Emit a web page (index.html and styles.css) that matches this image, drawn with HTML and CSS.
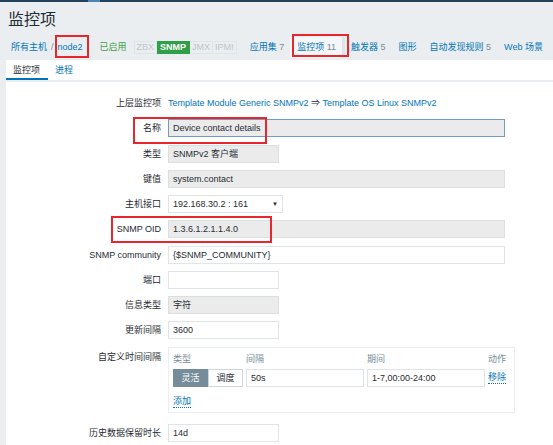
FILE: index.html
```html
<!DOCTYPE html>
<html lang="zh-CN">
<head>
<meta charset="utf-8">
<title>监控项</title>
<link rel="stylesheet" href="styles.css">
</head>
<body>
<div class="topbar"></div>
<header class="page-head">
  <h1 class="title">监控项</h1>
  <nav class="crumbs">
    <a class="link">所有主机</a><span class="sep">/</span><a class="link">node2</a>
    <span class="enabled">已启用</span>
    <span class="status"><span class="st">ZBX</span><span class="st on">SNMP</span><span class="st">JMX</span><span class="st">IPMI</span></span>
    <a class="menu first">应用集 <span class="cnt">7</span></a>
    <a class="menu selected">监控项 <span class="cnt">11</span></a>
    <a class="menu after-sel">触发器 <span class="cnt">5</span></a>
    <a class="menu">图形</a>
    <a class="menu">自动发现规则 <span class="cnt">5</span></a>
    <a class="menu">Web 场景</a>
  </nav>
</header>
<main class="panel">
  <div class="tabs">
    <span class="tab active">监控项</span>
    <span class="tab">进程</span>
  </div>
  <form class="form">
    <label class="lbl">上层监控项</label>
    <div class="val"><a class="link">Template Module Generic SNMPv2</a> ⇒ <a class="link">Template OS Linux SNMPv2</a></div>

    <label class="lbl">名称</label>
    <div class="field wide ro focus">Device contact details</div>

    <label class="lbl">类型</label>
    <div class="field short ro">SNMPv2 客户端</div>

    <label class="lbl">键值</label>
    <div class="field wide ro">system.contact</div>

    <label class="lbl">主机接口</label>
    <div class="field select">192.168.30.2 : 161<span class="arrow">▼</span></div>

    <label class="lbl">SNMP OID</label>
    <div class="field wide ro">1.3.6.1.2.1.1.4.0</div>

    <label class="lbl">SNMP community</label>
    <div class="field wide">{$SNMP_COMMUNITY}</div>

    <label class="lbl">端口</label>
    <div class="field short"></div>

    <label class="lbl">信息类型</label>
    <div class="field short ro">字符</div>

    <label class="lbl">更新间隔</label>
    <div class="field short">3600</div>

    <label class="lbl top">自定义时间间隔</label>
    <div class="intervals">
      <div class="int-grid">
        <span class="th">类型</span>
        <span class="th">间隔</span>
        <span class="th">期间</span>
        <span class="th">动作</span>
        <span class="seg"><span class="btn on">灵活</span><span class="btn">调度</span></span>
        <span class="field">50s</span>
        <span class="field">1-7,00:00-24:00</span>
        <a class="link dotted act">移除</a>
      </div>
      <a class="link dotted add">添加</a>
    </div>

    <label class="lbl">历史数据保留时长</label>
    <div class="field short">14d</div>
  </form>
</main>
<div class="mark mark-node"></div>
<div class="mark mark-items"></div>
<div class="mark mark-name"></div>
<div class="mark mark-oid"></div>
</body>
</html>
```

FILE: styles.css
```css
html, body {
  margin: 0;
  padding: 0;
}
body {
  background: #ebeef0;
  color: #1f2c33;
  font-family: "Liberation Sans", "Noto Sans CJK SC", sans-serif;
  font-size: 9px;
  line-height: 12px;
  overflow: hidden;
  height: 445px;
}
.topbar {
  height: 2px;
  background: linear-gradient(to right, #23415b 0, #23415b 88px, #4a86b5 88px, #4a86b5 100px, #23415b 100px);
}
.page-head {
  padding-left: 8px;
}
.title {
  margin: 0;
  padding-top: 8px;
  font-size: 16px;
  line-height: 20px;
  font-weight: normal;
  color: #1f2c33;
}
.crumbs {
  display: flex;
  align-items: center;
  height: 22px;
  margin-top: 6px;
  padding-left: 3px;
  white-space: nowrap;
}
.link {
  color: #0275b8;
  text-decoration: none;
}
.sep {
  margin: 0 4px;
  color: #768d99;
}
.enabled {
  margin-left: 17px;
  color: #429e47;
}
.status {
  display: flex;
  margin-left: 7px;
  height: 13px;
}
.st {
  display: inline-block;
  height: 13px;
  line-height: 11px;
  box-sizing: border-box;
  padding: 0 2px;
  border: 1px solid #dfe4e7;
  color: #bcc5ca;
}
.st + .st {
  border-left: none;
}
.st.on {
  background: #2f9f48;
  border-color: #2f9f48;
  color: #fff;
  font-weight: bold;
  padding: 0 3px;
}
.menu {
  color: #0275b8;
  margin-left: 13px;
}
.menu.first {
  margin-left: 13px;
}
.menu.selected {
  margin-left: 6px;
  padding: 0 6px 0 7px;
  line-height: 21px;
  background: #f4f6f7;
  border-right: 3px solid #dfe4e7;
}
.menu.after-sel {
  margin-left: 6px;
}
.cnt {
  color: #768d99;
}
.panel {
  margin-left: 6px;
  margin-top: 2px;
  background: #fff;
  height: 400px;
}
.tabs {
  display: flex;
  height: 20px;
  border-bottom: 2px solid #ebeef0;
}
.tab {
  padding: 0 7px;
  line-height: 20px;
  color: #0275b8;
}
.tab.active {
  color: #1f2c33;
  padding-right: 8px;
  box-shadow: inset 0 -2px 0 #0275b8;
}
.form {
  display: grid;
  grid-template-columns: 155px 1fr;
  column-gap: 7px;
  row-gap: 7.25px;
  padding-top: 12px;
  margin: 0;
  align-items: start;
}
.lbl {
  text-align: right;
  line-height: 18px;
  white-space: nowrap;
}
.lbl.top {
  line-height: 12px;
  padding-top: 4px;
}
.val {
  line-height: 18px;
  white-space: nowrap;
}
.field {
  box-sizing: border-box;
  height: 18px;
  line-height: 16px;
  border: 1px solid #dfe4e7;
  padding: 0 4px;
  background: #fff;
  white-space: nowrap;
  overflow: hidden;
}
.field.ro {
  background: #ebebeb;
  border-color: #dcdfe1;
}
.field.focus {
  border-color: #6c9ec3;
}
.wide {
  width: 337px;
}
.short {
  width: 111px;
}
.select {
  width: 115px;
  display: flex;
  justify-content: space-between;
  padding-right: 4px;
}
.arrow {
  font-size: 6px;
  color: #1f2c33;
}
.intervals {
  box-sizing: border-box;
  width: 347px;
  height: 66px;
  border: 1px solid #ebeef0;
  padding: 4px 4px 0;
  margin-bottom: 4px;
}
.int-grid {
  display: grid;
  grid-template-columns: 70px 118px 118px 1fr;
  column-gap: 3px;
  row-gap: 3px;
}
.th {
  color: #768d99;
  line-height: 14px;
}
.seg {
  display: flex;
  height: 18px;
}
.btn {
  box-sizing: border-box;
  width: 35px;
  height: 18px;
  line-height: 16px;
  text-align: center;
  border: 1px solid #cfd7db;
  background: #fff;
  color: #1f2c33;
}
.btn.on {
  background: #768d99;
  border-color: #768d99;
  color: #fff;
}
.act {
  align-self: center;
  justify-self: start;
}
.dotted {
  border-bottom: 1px dotted #0275b8;
}
.add {
  display: inline-block;
  margin-top: 9px;
  line-height: 11px;
}
.mark {
  position: absolute;
  box-sizing: border-box;
  border: 2px solid #e8262b;
}
.mark-node {
  left: 55px;
  top: 35px;
  width: 34px;
  height: 23px;
}
.mark-items {
  left: 292px;
  top: 34px;
  width: 57px;
  height: 23px;
}
.mark-name {
  left: 133px;
  top: 117px;
  width: 134px;
  height: 27px;
}
.mark-oid {
  left: 111px;
  top: 216px;
  width: 161px;
  height: 27px;
}
```
